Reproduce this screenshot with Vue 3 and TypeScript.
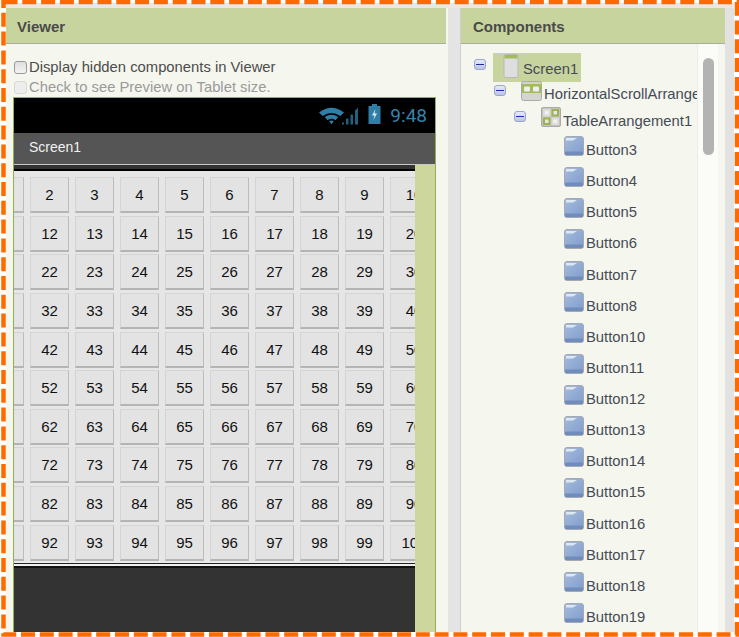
<script setup lang="ts">
const rows = Array.from({ length: 10 }, (_, r) =>
  Array.from({ length: 10 }, (_, c) => (r === 9 && c === 9 ? 100 : r * 10 + c + 1))
);
const buttons = [3, 4, 5, 6, 7, 8, 10, 11, 12, 13, 14, 15, 16, 17, 18, 19].map((n) => `Button${n}`);
</script>

<template>
  <div class="page">
    <main class="workspace">
      <section class="panel viewer">
        <header class="head">Viewer</header>
        <div class="viewer-body">
          <label class="check"><span class="box"></span>Display hidden components in Viewer</label>
          <label class="check muted"><span class="box"></span>Check to see Preview on Tablet size.</label>
          <div class="phone">
            <div class="status">
              <svg class="wifi" width="25" height="19" viewBox="0 0 24 18">
                <path d="M0 6 Q12 -3 24 6 L20.500 9.500 Q12 3.500 3.500 9.500Z" fill="#2f7ea8" />
                <path d="M5.500 10.500 Q12 6 18.500 10.500 L15.800 13.500 Q12 10.800 8.200 13.500Z" fill="#2f7ea8" />
                <path d="M9.800 14.500 Q12 13 14.200 14.500 L12 17.500Z" fill="#2f7ea8" />
              </svg>
              <svg class="bars" width="18" height="19" viewBox="0 0 18 18">
                <path d="M1 18h2v-2H1zM5 18h2.500v-6H5zM9.500 18H12V8H9.500zM14 18h3V1l-3 3z" fill="#23607f" />
              </svg>
              <svg class="battery" width="13" height="20" viewBox="0 0 13 20">
                <path d="M4 0h5v2h3.500v18H.5V2H4z" fill="#2f7ea8" />
                <path d="M7.500 5 4 11.500h2.500L5.500 16 9 9.500H6.500z" fill="#d5e8f2" />
              </svg>
              <span class="time">9:48</span>
            </div>
            <div class="title">Screen1</div>
            <div class="form">
              <div class="form-main">
                <div class="top-line"></div>
                <div class="grid">
                  <div v-for="(row, r) in rows" :key="r" class="grid-row">
                    <span v-for="n in row" :key="n" class="btn">{{ n }}</span>
                  </div>
                </div>
                <div class="bottom-line"></div>
                <div class="dark"></div>
              </div>
              <div class="filler"></div>
            </div>
          </div>
        </div>
      </section>
      <div class="splitter"></div>
      <section class="panel comps">
        <header class="head">Components</header>
        <div class="comps-body">
          <div class="tree">
            <div class="node n0">
              <span class="minus"></span>
              <span class="selected">
                <svg width="17" height="24" viewBox="0 0 17 24" class="ic-screen">
                  <rect x="1" y="0.500" width="14" height="23" rx="1.500" fill="#dedede" stroke="#b9b9b9" />
                  <rect x="1.500" y="1" width="13" height="3.500" fill="#a4bb5c" />
                </svg>
                <span>Screen1</span>
              </span>
            </div>
            <div class="node n1">
              <span class="minus"></span>
              <svg width="21" height="20" viewBox="0 0 21 20" class="ic">
                <rect x="0.500" y="0.500" width="20" height="19" rx="2" fill="#d4d4d0" stroke="#aaa" />
                <rect x="1" y="3" width="19" height="9" fill="#a4bb5c" />
                <rect x="3" y="5.500" width="6" height="5" rx="1" fill="#eee" />
                <rect x="12" y="5.500" width="6" height="5" rx="1" fill="#eee" />
              </svg>
              <span class="clip">HorizontalScrollArrangement1</span>
            </div>
            <div class="node n2">
              <span class="minus"></span>
              <svg width="20" height="20" viewBox="0 0 20 20" class="ic">
                <rect x="0.500" y="0.500" width="19" height="19" rx="1.500" fill="#c4c4bc" stroke="#aaa" />
                <rect x="2" y="2" width="7.500" height="7.500" fill="#dcdcd8" />
                <rect x="10.500" y="2" width="7.500" height="7.500" fill="#9db353" />
                <rect x="2" y="10.500" width="7.500" height="7.500" fill="#9db353" />
                <rect x="10.500" y="10.500" width="7.500" height="7.500" fill="#dcdcd8" />
                <rect x="4" y="4" width="3.500" height="3.500" fill="#f2f2f2" />
                <rect x="12.500" y="12.500" width="3.500" height="3.500" fill="#f2f2f2" />
                <rect x="12.500" y="4" width="3.500" height="3.500" fill="#e6e6e6" />
                <rect x="4" y="12.500" width="3.500" height="3.500" fill="#e6e6e6" />
              </svg>
              <span>TableArrangement1</span>
            </div>
            <div v-for="b in buttons" :key="b" class="node leaf">
              <svg width="20" height="20" viewBox="0 0 20 20" class="ic">
                <defs>
                  <linearGradient id="bg" x1="0" y1="0" x2="1" y2="1">
                    <stop offset="0" stop-color="#a6bbdd" />
                    <stop offset="1" stop-color="#7f9ccb" />
                  </linearGradient>
                </defs>
                <rect x="0.500" y="0.500" width="19" height="19" rx="2.500" fill="url(#bg)" stroke="#a4a9b2" />
                <rect x="1" y="15.500" width="18" height="3.500" rx="1" fill="#6f8cbc" />
                <path d="M2 2h11l-4 2.500H2z" fill="#dfe7f3" />
              </svg>
              <span>{{ b }}</span>
            </div>
          </div>
          <div class="track"><div class="thumb"></div></div>
        </div>
      </section>
      <div class="edge"></div>
    </main>
    <svg class="dashes" width="739" height="637" viewBox="0 0 739 637">
      <rect x="3.500" y="2" width="733.500" height="632.500" fill="none" stroke="#ff6a00" stroke-width="4.500" stroke-dasharray="14 4.800" />
    </svg>
  </div>
</template>

<style>
html, body { margin: 0; background: #fff; }
</style>

<style scoped>
.page {
  position: relative;
  width: 739px;
  height: 637px;
  box-sizing: border-box;
  padding: 3px 5px 5px 6px;
  overflow: hidden;
  background: #fff;
  font-family: "Liberation Sans", Arial, sans-serif;
  color: #444;
}
.workspace {
  display: flex;
  height: 629px;
  padding-top: 5px;
  box-sizing: border-box;
  background: #e8e8e8;
  overflow: hidden;
}
.panel {
  display: flex;
  flex-direction: column;
  background: #f5f6ee;
  min-width: 0;
}
.viewer { width: 440px; }
.comps { width: 264px; margin-left: 0; }
.splitter {
  width: 15px;
  background: #e4e4e4;
  border-left: 2px solid #f5f6ee;
  border-right: 1px solid #cfcfcf;
  box-sizing: border-box;
}
.edge { flex: 1; background: #e2e2e2; }
.head {
  height: 36px;
  flex: none;
  box-sizing: border-box;
  background: #c8d49e;
  border-bottom: 1px solid #a9ad9c;
  padding: 0 11px;
  line-height: 38px;
  font-size: 15px;
  font-weight: bold;
  color: #4a4a4a;
}
.comps .head { padding-left: 12px; }
.viewer-body { flex: 1; min-height: 0; padding: 12px 0 0 7px; display: flex; flex-direction: column; }
.check {
  display: flex;
  align-items: center;
  height: 21px;
  font-size: 14.8px;
  color: #4c4c4c;
  white-space: nowrap;
}
.check.muted { color: #9a9a9a; height: 20px; }
.box {
  width: 11px;
  height: 11px;
  margin: 1px 2px 0 1px;
  border: 1px solid #9a9a9a;
  border-radius: 3px;
  background: linear-gradient(#dedede, #f4f4f4);
}
.muted .box { border-color: #d8d8d8; background: #ededed; }
.phone {
  width: 423px;
  flex: 1;
  min-height: 0;
  box-sizing: border-box;
  border: 1px solid #93b04f;
  border-bottom: 0;
  display: flex;
  flex-direction: column;
  background: #333;
}
.status {
  height: 35px;
  flex: none;
  background: #000;
  display: flex;
  align-items: center;
  justify-content: flex-end;
  padding-right: 8px;
}
.wifi { margin-top: -1px; }
.bars { margin: -1px 0 0 -3px; }
.battery { margin: -3px 0 0 9px; }
.time {
  margin-left: 9px;
  font-size: 19px;
  color: #3583ab;
  font-family: "Roboto", "Liberation Sans", sans-serif;
}
.title {
  height: 31px;
  flex: none;
  box-sizing: border-box;
  background: #555;
  color: #f0f0f0;
  font-size: 14px;
  padding-left: 15px;
  line-height: 29px;
}
.form { flex: 1; min-height: 0; display: flex; border-top: 1px solid #c9c9c9; }
.form-main { width: 401px; display: flex; flex-direction: column; overflow: hidden; }
.filler { flex: 1; background: #cdd69c; }
.top-line { height: 6px; flex: none; background: linear-gradient(#333 0 4px, #000 4px); }
.grid {
  flex: none;
  height: 391px;
  padding-top: 6px;
  box-sizing: border-box;
  background: #e6e6e6;
  overflow: hidden;
}
.grid-row {
  display: flex;
  gap: 6px;
  margin-left: -29px;
  height: 38.650px;
}
.btn {
  flex: none;
  width: 37px;
  height: 33px;
  line-height: 33px;
  text-align: center;
  font-size: 15px;
  color: #111;
  background: #e3e3e3;
  border: 1px solid #d4d4d4;
  border-right-color: #bcbcbc;
  border-bottom: 2px solid #b4b4b4;
}
.btn:last-child { width: 46px; }
.bottom-line {
  height: 6px;
  flex: none;
  background: linear-gradient(#ededed 0 1px, #222 1px 2px, #eee 2px 4px, #111 4px);
}
.dark { flex: 1; background: #333; }
.comps-body { flex: 1; min-height: 0; display: flex; }
.tree { width: 236px; overflow: hidden; font-size: 14.8px; color: #454b55; padding-top: 9px; box-sizing: border-box; height: 100%; }
.track {
  width: 21px;
  background: #fbfbf8;
  border-left: 1px solid #ececec;
  box-sizing: border-box;
  padding: 14px 4px 0 5px;
}
.thumb { width: 11px; height: 97px; border-radius: 6px; background: #b3b3b3; }
.node { display: flex; align-items: flex-start; white-space: nowrap; }
.minus {
  flex: none;
  width: 12px;
  height: 11px;
  box-sizing: border-box;
  border: 1px solid #9aa5d0;
  border-radius: 3px;
  background: linear-gradient(#e8ebf6, #bcc4e2);
  position: relative;
}
.minus::after {
  content: "";
  position: absolute;
  left: 1px;
  right: 1px;
  top: 4px;
  height: 1px;
  background: #1a2fb0;
}
.n0 { height: 28px; padding-left: 13px; }
.n0 .minus { margin-top: 6px; }
.selected {
  display: flex;
  align-items: flex-start;
  width: 88px;
  height: 29px;
  margin-left: 7px;
  background: #c8d49e;
  padding-left: 10px;
  box-sizing: border-box;
}
.ic-screen { margin-top: 1px; flex: none; }
.selected span { margin: 8px 0 0 3px; }
.n1 { height: 26px; padding-left: 33px; }
.n1 .minus { margin-top: 4px; }
.n1 .ic { margin: 0 2px 0 15px; flex: none; }
.n1 .clip { margin-top: 5px; }
.n2 { height: 29px; padding-left: 53px; }
.n2 .minus { margin-top: 4px; }
.n2 .ic { margin: 0 2px 0 15px; flex: none; }
.n2 span:last-child { margin-top: 6px; }
.leaf { height: 31.130px; padding-left: 103px; }
.leaf .ic { flex: none; }
.leaf span { margin: 6px 0 0 2px; }
.dashes { position: absolute; left: 0; top: 0; pointer-events: none; }
</style>
